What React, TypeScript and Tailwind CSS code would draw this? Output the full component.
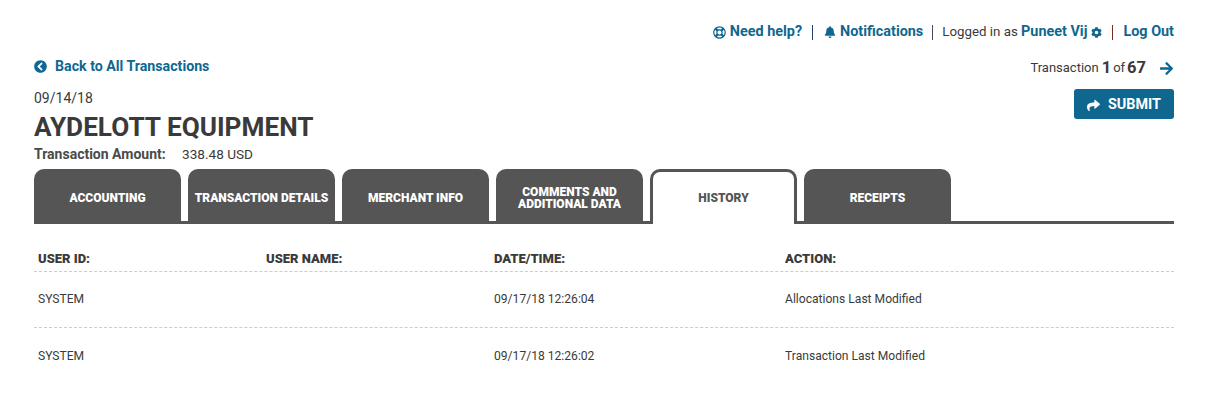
import React from 'react';
import { FaArrowRight, FaBell, FaChevronCircleLeft, FaCog, FaRegLifeRing, FaShare } from 'react-icons/fa';

const tabs = [
  { label: 'ACCOUNTING' },
  { label: 'TRANSACTION DETAILS' },
  { label: 'MERCHANT INFO' },
  { label: 'COMMENTS AND ADDITIONAL DATA' },
  { label: 'HISTORY', active: true },
  { label: 'RECEIPTS' },
];

const rows = [
  { user: 'SYSTEM', date: '09/17/18 12:26:04', action: 'Allocations Last Modified' },
  { user: 'SYSTEM', date: '09/17/18 12:26:02', action: 'Transaction Last Modified' },
];

export default function App() {
  return (
    <div className="h-[402px] w-[1216px] overflow-hidden bg-white pl-[34px] pr-[42px] pt-[22px] font-['Roboto','Liberation_Sans',sans-serif] text-[#3a3a3a]">
      <div className="flex h-[18px] items-center justify-end pt-[2px] text-[14.4px] font-bold text-[#0f6790]">
        <FaRegLifeRing className="mr-[4px] h-[13px] w-[13px]" />
        <span>Need help?</span>
        <span className="ml-[10px] mr-[11px] h-[15px] w-px bg-[#23406e]" />
        <FaBell className="mr-[4px] h-[12px] w-[12px]" />
        <span>Notifications</span>
        <span className="ml-[9px] mr-[9px] h-[15px] w-px bg-[#4a4a4a]" />
        <span className="text-[13.3px] font-normal text-[#3a3a3a]">Logged in as&nbsp;</span>
        <span>Puneet Vij</span>
        <FaCog className="ml-[4px] h-[11px] w-[11px]" />
        <span className="mx-[10px] h-[15px] w-px bg-[#7a2a2a]" />
        <span>Log Out</span>
      </div>

      <div className="flex justify-between">
        <div className="pt-[17px]">
          <div className="flex h-[18px] items-center pt-[1px] text-[14.2px] font-bold text-[#0f6790]">
            <FaChevronCircleLeft className="mr-[8px] h-[13px] w-[13px]" />
            Back to All Transactions
          </div>
          <div className="mt-[14px] text-[14px] leading-[18px]">09/14/18</div>
          <div className="mt-[4px] text-[26.2px] font-bold leading-[32px]">AYDELOTT EQUIPMENT</div>
          <div className="mt-[2px] flex text-[14px] leading-[18px]">
            <span className="w-[148px] font-bold text-[#4a4a4a]">Transaction Amount:</span>
            <span className="text-[13.6px]">338.48 USD</span>
          </div>
        </div>
        <div className="flex flex-col items-end pt-[18px]">
          <div className="flex h-[20px] items-center text-[13px]">
            Transaction<b className="ml-[3px] text-[16.5px]">1</b><span className="mx-[2px]">of</span><b className="text-[16.5px]">67</b>
            <FaArrowRight className="ml-[13px] h-[15px] w-[15px] text-[#0f6790]" />
          </div>
          <button className="mt-[11px] flex h-[30px] w-[100px] items-center justify-center rounded-[3px] bg-[#0f6790] pt-[2px] text-[14.4px] font-bold text-white">
            <FaShare className="mr-[8px] h-[13px] w-[13px]" />
            SUBMIT
          </button>
        </div>
      </div>

      <div className="mt-[6px] flex h-[55px] gap-[7px] border-b-[3px] border-[#555]">
        {tabs.map(t => (
          <div
            key={t.label}
            className={
              t.active
                ? 'z-10 flex h-[55px] w-[147px] shrink-0 items-center justify-center rounded-t-[10px] border-[3px] border-b-0 border-[#555] bg-white text-center text-[12px] font-black leading-[13px] text-[#555]'
                : 'flex h-[55px] w-[147px] shrink-0 items-center justify-center rounded-t-[10px] bg-[#555] px-1 pt-[3px] text-center text-[12px] font-black leading-[12.5px] text-white'
            }
          >
            {t.label}
          </div>
        ))}
      </div>

      <div className="mt-[22px] flex h-[26px] items-center border-b border-dashed border-[#ccc] pl-1 text-[13px] font-black">
        <span className="w-[228px]">USER ID:</span>
        <span className="w-[228px]">USER NAME:</span>
        <span className="w-[291px]">DATE/TIME:</span>
        <span>ACTION:</span>
      </div>
      {rows.map((r, i) => (
        <div key={r.date} className={i === 0 ? 'flex h-[56px] items-center border-b border-dashed border-[#ccc] pl-1 text-[12.1px]' : 'flex h-[56px] items-center pl-1 text-[12.1px]'}>
          <span className="w-[228px]">{r.user}</span>
          <span className="w-[228px]" />
          <span className="w-[291px]">{r.date}</span>
          <span>{r.action}</span>
        </div>
      ))}
    </div>
  );
}
